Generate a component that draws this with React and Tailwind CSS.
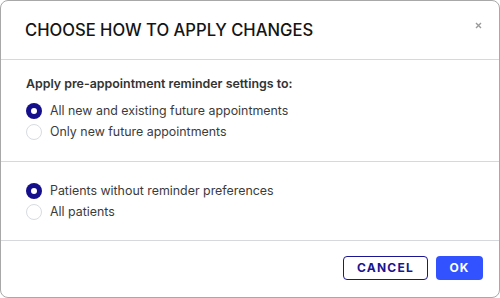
import React, { useState } from "react";

function Radio({ checked, label, onClick }) {
  return (
    <label onClick={onClick} className="flex items-center h-[21px] cursor-pointer">
      {checked ? (
        <span className="w-[16px] h-[16px] rounded-full bg-[#150f8c] flex items-center justify-center shrink-0">
          <span className="w-[6px] h-[6px] rounded-full bg-white" />
        </span>
      ) : (
        <span className="w-[16px] h-[16px] rounded-full border border-[#d8dbe0] bg-white shrink-0" />
      )}
      <span className="ml-[8px] text-[12.4px] text-[#3b3b3b] leading-[18px]">{label}</span>
    </label>
  );
}

export default function App() {
  const [scope, setScope] = useState("all");
  const [who, setWho] = useState("without");

  return (
    <div
      className="w-[500px] h-[298px] bg-white border border-[#a8a8a8] rounded-[8px] flex flex-col overflow-hidden"
      style={{ fontFamily: "Inter, 'Noto Sans', sans-serif" }}
    >
      {/* Header */}
      <div className="h-[59px] flex items-center justify-between pl-[24px] pr-[17px] border-b border-[#d5d8dd] relative">
        <h2 className="text-[16.6px] font-medium text-[#141414]">
          CHOOSE HOW TO APPLY CHANGES
        </h2>
        <button className="absolute right-[17px] top-[21px] text-[#9a9a9a]">
          <svg width="7" height="7" viewBox="0 0 7 7">
            <path d="M1 1L6 6M6 1L1 6" stroke="currentColor" strokeWidth="1.4" />
          </svg>
        </button>
      </div>

      {/* Appointment scope */}
      <div className="pt-[15px] pb-[19px] pl-[25px] border-b border-[#d5d8dd]">
        <div className="text-[12.4px] font-semibold text-[#333] leading-[18px]">
          Apply pre-appointment reminder settings to:
        </div>
        <div className="mt-[7px]">
          <Radio checked={scope === "all"} label="All new and existing future appointments" onClick={() => setScope("all")} />
          <Radio checked={scope === "new"} label="Only new future appointments" onClick={() => setScope("new")} />
        </div>
      </div>

      {/* Patient scope */}
      <div className="pt-[18px] pb-[18px] pl-[25px] border-b border-[#d5d8dd]">
        <Radio checked={who === "without"} label="Patients without reminder preferences" onClick={() => setWho("without")} />
        <Radio checked={who === "all"} label="All patients" onClick={() => setWho("all")} />
      </div>

      {/* Actions */}
      <div className="flex justify-end gap-[8px] pt-[15px] pr-[16px]">
        <button className="w-[85px] h-[24px] rounded-[4px] border border-[#1a1590] text-[#1a1590] text-[12px] font-bold tracking-[1.2px]">
          CANCEL
        </button>
        <button className="w-[47px] h-[24px] rounded-[4px] bg-[#3352ff] text-white text-[12px] font-bold tracking-[1px]">
          OK
        </button>
      </div>
    </div>
  );
}
